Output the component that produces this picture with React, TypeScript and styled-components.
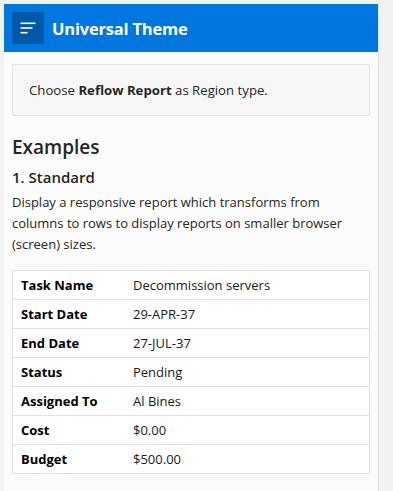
import React from 'react';
import styled, { createGlobalStyle } from 'styled-components';

const GlobalStyle = createGlobalStyle`
  html, body {
    margin: 0;
    padding: 0;
    background: #f2f2f2;
    font-family: "Open Sans", "Noto Sans", sans-serif;
    color: #262626;
  }
`

const Page = styled.div`
  padding: 4px 0 0 4px;
  min-height: 491px;
  box-sizing: border-box;
`

const Panel = styled.div`
  width: 375px;
  min-height: 487px;
  background: #fcfcfc;
  border-right: 1px solid #e2e2e2;
  box-sizing: border-box;
`

const Header = styled.header`
  height: 48px;
  background: #0076df;
  display: flex;
  align-items: center;
  padding: 0 8px;
  gap: 8px;
`

const MenuButton = styled.button`
  width: 32px;
  height: 32px;
  border: none;
  border-radius: 2px;
  background: #0058a8;
  display: flex;
  align-items: center;
  justify-content: center;
  padding: 0;
`

const Title = styled.h1`
  margin: 0;
  color: #fff;
  font-size: 16.5px;
  font-weight: 700;
  letter-spacing: -0.2px;
`

const Content = styled.main`
  padding: 12px 8px 16px 8px;
`

const Callout = styled.div`
  background: #f7f7f7;
  border: 1px solid #e4e4e4;
  border-radius: 2px;
  padding: 15px 16px;
  font-size: 13.2px;
  line-height: 20px;

  b {
    font-weight: 700;
  }
`

const Heading = styled.h2`
  margin: 17px 0 0;
  font-size: 19px;
  font-weight: 600;
  line-height: 28px;
`

const SubHeading = styled.h3`
  margin: 6px 0 0;
  font-size: 15px;
  font-weight: 600;
  line-height: 20px;
`

const Text = styled.p`
  margin: 5px 0 0;
  font-size: 13px;
  line-height: 21px;
`

const Table = styled.table`
  margin-top: 15px;
  width: 100%;
  border-collapse: collapse;
  border: 1px solid #e2e2e2;
  background: #fff;
  font-size: 13px;
`

const Row = styled.tr`
  height: 29px;
  border-top: 1px solid #e2e2e2;
`

const Cell = styled.td<{ $label?: boolean }>`
  padding: 0 8px;
  width: ${p => (p.$label ? '96px' : 'auto')};
  font-weight: ${p => (p.$label ? 700 : 400)};
  color: ${p => (p.$label ? '#000' : '#1a1a1a')};
  white-space: nowrap;
`

const rows = [
  ['Task Name', 'Decommission servers'],
  ['Start Date', '29-APR-37'],
  ['End Date', '27-JUL-37'],
  ['Status', 'Pending'],
  ['Assigned To', 'Al Bines'],
  ['Cost', '$0.00'],
  ['Budget', '$500.00'],
]

const MenuIcon = () => (
  <svg width="16" height="16" viewBox="0 0 16 16">
    <rect x="0.5" y="2.5" width="15" height="1.6" fill="#fff" />
    <rect x="0.5" y="7.2" width="12" height="1.6" fill="#fff" />
    <rect x="0.5" y="11.9" width="7" height="1.6" fill="#fff" />
  </svg>
)

export default function App() {
  return (
    <Page>
      <GlobalStyle />
      <Panel>
        <Header>
          <MenuButton aria-label="menu"><MenuIcon /></MenuButton>
          <Title>Universal Theme</Title>
        </Header>
        <Content>
          <Callout>Choose <b>Reflow Report</b> as Region type.</Callout>
          <Heading>Examples</Heading>
          <SubHeading>1. Standard</SubHeading>
          <Text>Display a responsive report which transforms from columns to rows to display reports on smaller browser (screen) sizes.</Text>
          <Table>
            <tbody>
              {rows.map(([label, value]) => (
                <Row key={label}>
                  <Cell $label>{label}</Cell>
                  <Cell>{value}</Cell>
                </Row>
              ))}
            </tbody>
          </Table>
        </Content>
      </Panel>
    </Page>
  )
}
